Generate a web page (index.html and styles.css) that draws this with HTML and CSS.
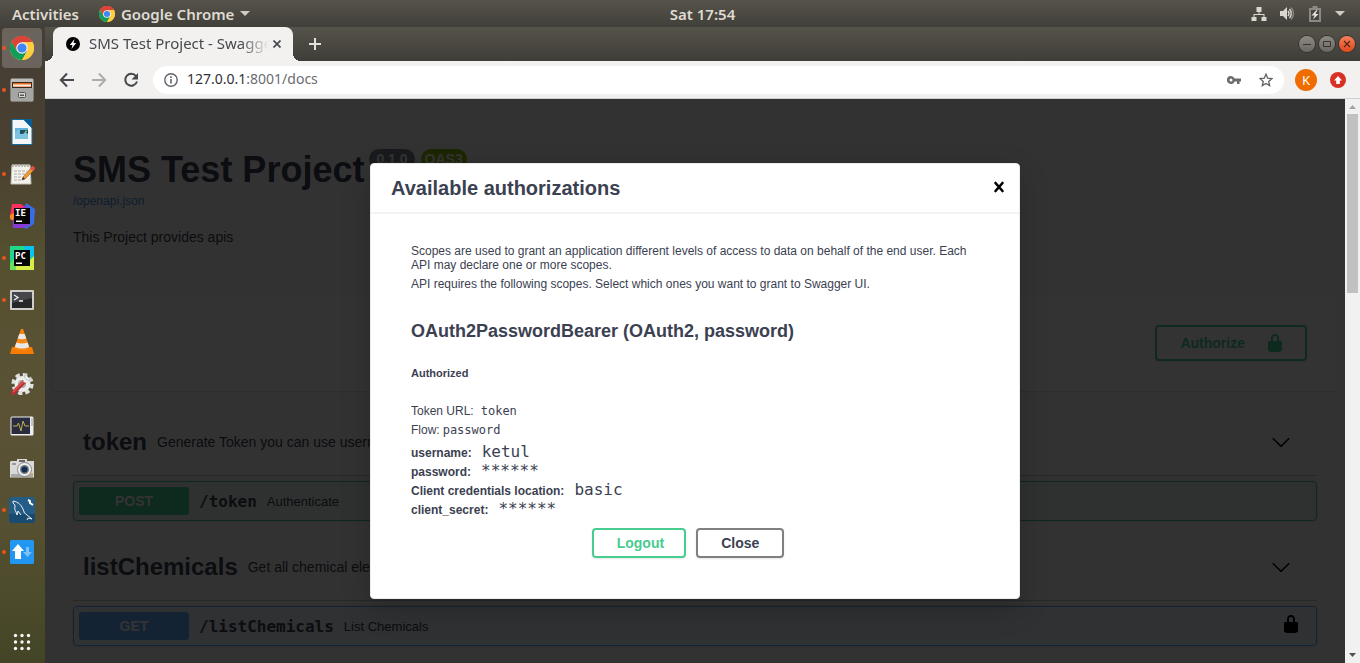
FILE: index.html
```html
<!DOCTYPE html>
<html lang="en">
<head>
<meta charset="utf-8">
<title>SMS Test Project - Swagger UI</title>
<link rel="stylesheet" href="styles.css">
</head>
<body>
<svg class="defs" width="0" height="0" aria-hidden="true">
  <symbol id="chrome" viewBox="0 0 24 24">
    <circle cx="12" cy="12" r="12" fill="#fbc93a"/>
    <path d="M12 12 1.6 6A12 12 0 0 1 22.4 6Z" fill="#db4437"/>
    <path d="M12 6H22.4A12 12 0 0 0 1.6 6L6.8 15Z" fill="#db4437"/>
    <path d="M1.6 6A12 12 0 0 0 12 24L17.2 15 12 12 6.8 15Z" fill="#0f9d58"/>
    <path d="M12 6H22.4A12 12 0 0 1 12 24L17.2 15Z" fill="#ffcd40"/>
    <circle cx="12" cy="12" r="5.8" fill="#f1f1f1"/>
    <circle cx="12" cy="12" r="4.6" fill="#4285f4"/>
  </symbol>
  <symbol id="lock" viewBox="0 0 20 20">
    <path d="M15.8 8H14V5.6C14 2.703 12.665 1 10 1 7.334 1 6 2.703 6 5.6V8H4c-.553 0-1 .646-1 1.199V17c0 .549.428 1.139.951 1.307l1.197.387C5.672 18.861 6.55 19 7.1 19h5.8c.549 0 1.428-.139 1.951-.307l1.196-.387c.524-.167.953-.757.953-1.306V9.199C17 8.646 16.352 8 15.8 8zM12 8H8V5.199C8 3.754 8.797 3 10 3c1.203 0 2 .754 2 2.199V8z"/>
  </symbol>
  <symbol id="arrow-down" viewBox="0 0 20 20">
    <path d="M17.418 6.109c.272-.268.709-.268.979 0s.271.701 0 .969l-7.908 7.83c-.27.268-.707.268-.979 0l-7.908-7.83c-.27-.268-.27-.701 0-.969.271-.268.709-.268.979 0L10 13.25l7.418-7.141z"/>
  </symbol>
</svg>

<header class="topbar">
  <div class="topbar-left">
    <button class="activities">Activities</button>
    <button class="app-menu"><svg width="16" height="16"><use href="#chrome"/></svg>Google Chrome<svg width="10" height="6" viewBox="0 0 10 6"><path d="M0 0h10L5 5z" fill="#cfccc4"/></svg></button>
  </div>
  <button class="clock">Sat 17:54</button>
  <div class="tray">
    <svg width="16" height="16" viewBox="0 0 16 16" fill="#dad7cf"><path d="M5.500 1h5v5h-2v2h5v3h2v4h-5v-4h2V9h-9v2h2v4h-5v-4h2V8h5V6h-2z"/></svg>
    <svg width="16" height="16" viewBox="0 0 16 16" fill="none"><path d="M1 5h3l4-4v13l-4-4H1z" fill="#dad7cf"/><path d="M9 5q2 2.500 0 5M10.500 3q3.500 4.500 0 9" stroke="#dad7cf" stroke-width="1.500"/><path d="M12 1.500q5 6 0 12" stroke="#85827b" stroke-width="1.600"/></svg>
    <svg width="16" height="16" viewBox="0 0 16 16"><path d="M5.500 0h5v2h3.500v14H2V2h3.500z" fill="#8c8982"/><path d="M4 4h8v10H4z" fill="#47453f"/><path d="M9.500 4 4.500 9.500h3L6 13.500l5.500-5.500h-3l2-4z" fill="#e6e3dc"/></svg>
    <svg width="10" height="6" viewBox="0 0 10 6"><path d="M0 0h10L5 5z" fill="#cfccc4"/></svg>
  </div>
</header>

<div class="desktop">
  <nav class="dock" aria-label="Dock">
    <button class="dock-item running active" aria-label="Google Chrome"><svg width="24" height="24"><use href="#chrome"/></svg></button>
    <button class="dock-item running" aria-label="Files"><svg width="24" height="24" viewBox="0 0 24 24"><rect x=".5" y=".5" width="23" height="23" rx="1.500" fill="#bdbdbb"/><path d="M1 10h22v13H1z" fill="#a5a5a3"/><path d="M2 4h20v6H2z" fill="#3a2a20"/><path d="M3 5h18v4H3z" fill="#e86a1c"/><path d="M3 6.500h18v2H3z" fill="#f6ece2"/><rect x="8.500" y="14.500" width="7" height="5" rx="1" fill="#d8d8d6" stroke="#555"/><path d="M10 16.500h4v1.500h-4z" fill="#555"/></svg></button>
    <button class="dock-item" aria-label="LibreOffice Writer"><svg width="24" height="26" viewBox="0 0 24 26"><path d="M2 .5h12L22 9v16.500H2z" fill="#f4f6f8" stroke="#146c9c"/><path d="M13 0h9v9z" fill="#0b5c93"/><path d="M5 9h13v3H8v8H5z" fill="#64b4d8"/><path d="M8 11h10v9H5v-6z" fill="#7cc4e0"/><path d="M10 11h8v4l-3-2-2 2h-3z" fill="#1c4f61"/><circle cx="16" cy="12.500" r="1" fill="#a8c850"/></svg></button>
    <button class="dock-item running" aria-label="Text Editor"><svg width="26" height="24" viewBox="0 0 26 24"><path d="M3 3h18l1 19H2z" fill="#f3f2ed" stroke="#c4c2b8"/><path d="M4 2v3M7 2v3M10 2v3M13 2v3M16 2v3M19 2v3" stroke="#aaa8a0" stroke-width="1.500"/><path d="M5 9h13M5 12h11M5 15h8M5 18h7" stroke="#aaa" stroke-dasharray="3 1"/><path d="m13 18 1-3 8-9 3 2-9 9z" fill="#ed9b35" stroke="#9b5819" stroke-width=".6"/><path d="m21 7 2-3q3 0 3 3l-2 2z" fill="#df5145"/><path d="m13 18 1-3 2 2z" fill="#333"/></svg></button>
    <button class="dock-item" aria-label="IntelliJ IDEA"><svg width="26" height="26" viewBox="0 0 26 26"><path d="m3 1 9 0 4 3-8 18-7-8z" fill="#fe315d"/><path d="m1 12 6-3v10l-6-3z" fill="#f98a1f"/><path d="m17 0 9 6-1 15-8 5-8-5z" fill="#3b6be8"/><path d="m4 17 5-10 9-5 3 20-8 3-9 0z" fill="#883bd6"/><path d="M5 5h16v16H5z" fill="#050505"/><text class="ide-mark" x="6" y="13">IE</text><path d="M7 17.500h6v1.500H7z" fill="#fff"/></svg></button>
    <button class="dock-item running" aria-label="PyCharm"><svg width="24" height="24" viewBox="0 0 24 24"><path d="M0 0h24v24H0z" fill="#21d789"/><path d="M14 0h10v14L15 5z" fill="#07c3f2"/><path d="m24 10-9 9-15 0v5h24z" fill="#d8ee48"/><path d="m0 18 6-8v14H0z" fill="#6be05e"/><path d="M4 4h16v16H4z" fill="#050505"/><text class="ide-mark" x="5" y="13">PC</text><path d="M6 16.500h6v1.500H6z" fill="#fff"/></svg></button>
    <button class="dock-item running" aria-label="Terminal"><svg width="24" height="20" viewBox="0 0 24 20"><rect width="24" height="20" rx="1" fill="#cfcfcd"/><path d="M2 2h20v16H2z" fill="#262729"/><path d="M2 2h20v6L2 13z" fill="#45474a"/><path d="m4 5 4 2.500L4 10M9 11h4" fill="none" stroke="#f2f2f2" stroke-width="1.300"/></svg></button>
    <button class="dock-item" aria-label="VLC"><svg width="24" height="26" viewBox="0 0 24 26"><path d="M2 18h20l2 7H0z" fill="#f57c00"/><path d="M11 0h2l7 20q-8 3-16 0z" fill="#f68714"/><path d="m9.300 5h5.400l1.600 4.500q-4.300 1.500-8.600 0zM6.400 13.500q5.600 1.800 11.200 0l1.600 4.500q-7.200 3-14.400 0z" fill="#e9e9e7"/></svg></button>
    <button class="dock-item" aria-label="Settings"><svg width="24" height="24" viewBox="0 0 24 24"><circle cx="12.500" cy="12" r="8" fill="#eceeec"/><circle cx="12.500" cy="12" r="9.300" fill="none" stroke="#dfe1df" stroke-width="3.600" stroke-dasharray="4.300 3.005"/><circle cx="12" cy="12" r="4" fill="#a9aaa5"/><path d="m3 21 11-11" stroke="#b92f33" stroke-width="4" stroke-linecap="round"/><path d="m3 20 11-11" stroke="#e0585a" stroke-width="1.200"/><path d="m14 10 4-4" stroke="#eee" stroke-width="3"/><path d="M17 1q-4 3-1 6t6-1l-3 0-2-2z" fill="#f4f4f4" stroke="#999" stroke-width=".6"/></svg></button>
    <button class="dock-item" aria-label="System Monitor"><svg width="24" height="20" viewBox="0 0 24 20"><rect x=".5" y=".5" width="23" height="19" rx="1.500" fill="#eeeeec"/><path d="M1.500 1.500h18.500v16.500H1.500z" fill="#292c3e"/><path d="M3 10h4l1.500-3 2.500 8 2-10 2 5h4" fill="none" stroke="#bfae4c"/><path d="M21 3h2M21 5h2M21 7h2M21 9h2" stroke="#99a"/></svg></button>
    <button class="dock-item" aria-label="Screenshot"><svg width="24" height="19" viewBox="0 0 24 19"><path d="M1 2h6V0h10v2h7v16.500H0V3z" fill="#d9d9d7"/><path d="M1 15h22v3H1z" fill="#aaa"/><path d="M9 1h6v2H9z" fill="#666"/><circle cx="14.500" cy="10.500" r="7" fill="#efefed" stroke="#888"/><circle cx="14.500" cy="10.500" r="4.500" fill="#73777b"/><circle cx="14.500" cy="10.500" r="3" fill="#122e56"/><path d="M2 4h4v2H2z" fill="#999"/><circle cx="22" cy="15" r="1" fill="#e59a2a"/></svg></button>
    <button class="dock-item running" aria-label="MySQL Workbench"><svg width="26" height="26" viewBox="0 0 26 26"><rect width="26" height="26" rx="3" fill="#235c85"/><path d="M0 17h26v6q0 3-3 3H3q-3 0-3-3z" fill="#194a70"/><path d="M4 4q7 1 10 8 1 5 4 6l5 4-4-1-1 2M4 4q-1 2 2 4-1 5 1 7l1 3 1-4 3 4" fill="none" stroke="#e8eef2"/><path d="m19 3 2 1 0 2 3 2" fill="none" stroke="#fff" stroke-width="2"/></svg></button>
    <button class="dock-item running" aria-label="File Transfer"><svg width="24" height="24" viewBox="0 0 24 24"><rect width="24" height="24" rx="1.500" fill="#2196f3"/><path d="m8 4 6 7h-3v8H5v-8H2z" fill="#fff"/><path d="M16 7h3v5h3l-4.500 5L13 12h3z" fill="#7cc0f8"/></svg></button>
    <button class="dock-item show-apps" aria-label="Show Applications"><svg width="18" height="18" viewBox="0 0 18 18" fill="#f6f5f2"><circle cx="2.500" cy="2.500" r="1.700"/><circle cx="9" cy="2.500" r="1.700"/><circle cx="15.500" cy="2.500" r="1.700"/><circle cx="2.500" cy="9" r="1.700"/><circle cx="9" cy="9" r="1.700"/><circle cx="15.500" cy="9" r="1.700"/><circle cx="2.500" cy="15.500" r="1.700"/><circle cx="9" cy="15.500" r="1.700"/><circle cx="15.500" cy="15.500" r="1.700"/></svg></button>
  </nav>

  <div class="browser">
    <div class="tabstrip">
      <div class="tab">
        <svg width="14" height="14" viewBox="0 0 14 14"><circle cx="7" cy="7" r="7" fill="#000"/><path d="M8.500 2 3.800 8h2.700L5.500 12l4.700-6H7.500z" fill="#fff"/></svg>
        <span class="tab-title">SMS Test Project - Swagger UI</span>
        <button class="tab-close" aria-label="Close tab"><svg width="8" height="8" viewBox="0 0 8 8"><path d="m.5.5 7 7m0-7-7 7" stroke="#45484c" stroke-width="1.700"/></svg></button>
      </div>
      <button class="new-tab" aria-label="New tab"><svg width="12" height="12" viewBox="0 0 12 12"><path d="M6 0v12M0 6h12" stroke="#e4e2dd" stroke-width="2"/></svg></button>
      <div class="window-controls">
        <button class="win-btn" aria-label="Minimize"><svg width="8" height="8" viewBox="0 0 8 8"><path d="M0 4.500h8" stroke="#35342f"/></svg></button>
        <button class="win-btn" aria-label="Maximize"><svg width="8" height="8" viewBox="0 0 8 8"><path d="M.5 1.500h7v5h-7z" fill="none" stroke="#35342f"/></svg></button>
        <button class="win-btn win-close" aria-label="Close"><svg width="8" height="8" viewBox="0 0 8 8"><path d="m1 1 6 6m0-6L1 7" stroke="#5a2413" stroke-width="1.200"/></svg></button>
      </div>
    </div>
    <div class="toolbar">
      <button class="tool" aria-label="Back"><svg width="16" height="16" viewBox="0 0 16 16"><path d="M8 1.500 1.800 8 8 14.500M2 8h13" fill="none" stroke="#45484c" stroke-width="2"/></svg></button>
      <button class="tool" aria-label="Forward"><svg width="16" height="16" viewBox="0 0 16 16"><path d="M8 1.500 14.200 8 8 14.500M14 8H1" fill="none" stroke="#aeadab" stroke-width="2"/></svg></button>
      <button class="tool" aria-label="Reload"><svg width="16" height="16" viewBox="0 0 16 16"><path d="M13 4A6 6 0 1 0 14 9.500" fill="none" stroke="#45484c" stroke-width="2"/><path d="M15 1v6.500H8.500z" fill="#45484c"/></svg></button>
      <div class="omnibox">
        <svg width="14" height="14" viewBox="0 0 14 14"><circle cx="7" cy="7" r="6.200" fill="none" stroke="#5f6368" stroke-width="1.400"/><path d="M6.200 6h1.600v4.500H6.200zM6.200 3.300h1.600v1.600H6.200z" fill="#5f6368"/></svg>
        <a class="address" href="#docs">127.0.0.1<span class="address-path">:8001/docs</span></a>
        <button class="omni-btn" aria-label="Saved passwords"><svg width="14" height="8" viewBox="0 0 14 8"><path d="M4 0a4 4 0 1 0 3.600 5.500H10V8h2.500V5.500H14v-3H7.600A4 4 0 0 0 4 0zm0 2.500a1.500 1.500 0 1 1 0 3 1.500 1.500 0 0 1 0-3z" fill="#6b6b6b" fill-rule="evenodd"/></svg></button>
        <button class="omni-btn" aria-label="Bookmark"><svg width="14" height="14" viewBox="0 0 14 14"><path d="m7 1.200 1.700 4 4.300.4-3.300 2.800 1 4.200L7 10.400l-3.700 2.200 1-4.200L1 5.600l4.300-.4z" fill="none" stroke="#5f6368" stroke-width="1.300"/></svg></button>
      </div>
      <button class="avatar">K</button>
      <button class="update" aria-label="Update"><svg width="16" height="16" viewBox="0 0 16 16"><circle cx="8" cy="8" r="8" fill="#d93025"/><path d="m8 4 4 4.500H9.800V12H6.200V8.500H4z" fill="#fff"/></svg></button>
    </div>

    <div class="viewport">
      <div class="page">
        <main class="document">
          <section class="info wrapper">
            <h1 class="title">SMS Test Project <span class="badge">0.1.0</span> <span class="badge badge-oas">OAS3</span></h1>
            <a class="spec-link" href="#openapi">/openapi.json</a>
            <p class="description">This Project provides apis</p>
          </section>
          <section class="scheme">
            <div class="wrapper scheme-inner">
              <button class="btn btn-authorize">Authorize<svg width="20" height="20" fill="#49cc90"><use href="#lock"/></svg></button>
            </div>
          </section>
          <section class="tags wrapper">
            <div class="tag">
              <h2 class="tag-head"><span class="tag-name">token</span><small class="tag-desc">Generate Token you can use username and password</small><svg width="20" height="20"><use href="#arrow-down"/></svg></h2>
              <div class="op op-post"><span class="method">POST</span><span class="path">/token</span><span class="summary">Authenticate</span></div>
            </div>
            <div class="tag">
              <h2 class="tag-head"><span class="tag-name">listChemicals</span><small class="tag-desc">Get all chemical elements</small><svg width="20" height="20"><use href="#arrow-down"/></svg></h2>
              <div class="op op-get"><span class="method">GET</span><span class="path">/listChemicals</span><span class="summary">List Chemicals</span><svg class="op-lock" width="20" height="20"><use href="#lock"/></svg></div>
            </div>
          </section>
        </main>
        <div class="backdrop">
          <div class="modal" role="dialog" aria-labelledby="modal-title">
            <div class="modal-head">
              <h3 id="modal-title">Available authorizations</h3>
              <button class="modal-close" aria-label="Close dialog"><svg width="20" height="20" viewBox="0 0 20 20"><path d="m6.500 6 7 8m0-8-7 8" stroke="#000" stroke-width="2.600" stroke-linecap="round"/></svg></button>
            </div>
            <div class="modal-body">
              <p>Scopes are used to grant an application different levels of access to data on behalf of the end user. Each API may declare one or more scopes.</p>
              <p>API requires the following scopes. Select which ones you want to grant to Swagger UI.</p>
              <h4>OAuth2PasswordBearer (OAuth2, password)</h4>
              <h6>Authorized</h6>
              <div class="flow">Token URL:<code class="spaced">token</code></div>
              <div class="flow">Flow:<code>password</code></div>
              <dl class="creds">
                <div><dt>username:</dt><dd>ketul</dd></div>
                <div><dt>password:</dt><dd>******</dd></div>
                <div><dt>Client credentials location:</dt><dd>basic</dd></div>
                <div><dt>client_secret:</dt><dd>******</dd></div>
              </dl>
              <div class="actions">
                <button class="btn btn-logout">Logout</button>
                <button class="btn">Close</button>
              </div>
            </div>
          </div>
        </div>
      </div>
      <div class="scrollbar" aria-hidden="true">
        <svg width="15" height="15" viewBox="0 0 15 15"><path d="m4 10 3.500-4L11 10z" fill="#a3a3a3"/></svg>
        <div class="thumb"></div>
        <svg class="scroll-down" width="15" height="15" viewBox="0 0 15 15"><path d="m4 5 3.500 4L11 5z" fill="#505050"/></svg>
      </div>
    </div>
  </div>
</div>
</body>
</html>
```

FILE: styles.css
```css
* { box-sizing: border-box; }

body {
  margin: 0;
  height: 100vh;
  display: flex;
  flex-direction: column;
  overflow: hidden;
  font-family: "Noto Sans", sans-serif;
  color: #3b4151;
}

h1, h2, h3, h4, h6, p, dl, dd { margin: 0; }

button {
  margin: 0;
  padding: 0;
  border: 0;
  background: none;
  font: inherit;
  color: inherit;
}

svg { display: block; flex: none; }
.defs { position: absolute; }

/* System bar */
.topbar {
  flex: none;
  display: grid;
  grid-template-columns: 1fr auto 1fr;
  align-items: center;
  height: 27px;
  padding: 0 15px 0 12px;
  background: linear-gradient(#56534a, #403f39);
  color: #dfdbd2;
  font-size: 15px;
  font-weight: 600;
  line-height: 20px;
}

.topbar-left, .app-menu, .tray { display: flex; align-items: center; }
.topbar-left { gap: 20px; }
.app-menu { gap: 6px; }
.clock { margin-left: 48px; }
.tray { justify-content: flex-end; gap: 12px; }

/* Dock */
.desktop { flex: 1; min-height: 0; display: flex; }

.dock {
  flex: none;
  display: flex;
  flex-direction: column;
  width: 45px;
  background: linear-gradient(#453e36 0%, #49402f 20%, #555030 36%, #5b5236 62%, #555031 78%, #4a4a2a 92%, #434327 100%);
}

.dock-item {
  position: relative;
  display: grid;
  place-items: center;
  width: 40px;
  height: 40px;
  margin: 1px 0 1px 2px;
  border-radius: 4px;
}

.dock-item.active { background: #6b645d; }

.dock-item.running::before {
  content: "";
  position: absolute;
  left: 0;
  top: 18px;
  width: 4px;
  height: 4px;
  border-radius: 50%;
  background: #e95420;
}

.show-apps { margin-top: auto; }

.ide-mark {
  font: bold 9px "DejaVu Sans Mono", monospace;
  fill: #fff;
}

/* Browser chrome */
.browser { flex: 1; min-width: 0; display: flex; flex-direction: column; }

.tabstrip {
  flex: none;
  display: flex;
  align-items: center;
  height: 34px;
  padding: 0 5px 0 8px;
  background: linear-gradient(#56534a, #3e3d38);
}

.tab {
  position: relative;
  display: flex;
  align-items: center;
  width: 240px;
  height: 34px;
  padding: 0 8px 0 13px;
  border-radius: 8px 8px 0 0;
  background: #f2f1f0;
  color: #45484c;
  font-size: 15px;
  line-height: 20px;
}

.tab::before, .tab::after {
  content: "";
  position: absolute;
  bottom: 0;
  width: 8px;
  height: 8px;
}

.tab::before { left: -8px; background: radial-gradient(circle at 0 0, transparent 8px, #f2f1f0 8px); }
.tab::after { right: -8px; background: radial-gradient(circle at 100% 0, transparent 8px, #f2f1f0 8px); }

.tab-title {
  flex: 1;
  margin-left: 9px;
  padding-bottom: 2px;
  overflow: hidden;
  white-space: nowrap;
  mask-image: linear-gradient(to right, #000 84%, transparent);
}

.tab-close { display: grid; place-items: center; width: 16px; height: 16px; }
.new-tab { margin-left: 16px; }
.window-controls { display: flex; gap: 4px; margin-left: auto; }

.win-btn {
  display: grid;
  place-items: center;
  width: 16px;
  height: 16px;
  border-radius: 50%;
  background: linear-gradient(#8b8982, #6a6861);
  box-shadow: 0 0 0 1px #35342f;
}

.win-close { background: linear-gradient(#f3805b, #e2481a); }

.toolbar {
  flex: none;
  display: flex;
  align-items: center;
  height: 38px;
  padding: 0 14px;
  gap: 16px;
  border-bottom: 1px solid #d0d0ce;
  background: #f2f1f0;
}

.omnibox {
  flex: 1;
  display: flex;
  align-items: center;
  height: 28px;
  margin: 0 -5px 0 -2px;
  padding: 0 11px;
  border-radius: 14px;
  background: #fff;
}

.address {
  flex: 1;
  margin-left: 9px;
  padding-bottom: 2px;
  color: #303236;
  font-size: 14px;
  line-height: 20px;
  text-decoration: none;
}

.address-path { color: #6a6d71; }
.omni-btn { margin-left: 18px; }

.avatar {
  width: 22px;
  height: 22px;
  border-radius: 50%;
  background: #ef6c00;
  color: #fff;
  font-size: 13px;
  line-height: 22px;
}

.update { margin-left: -3px; }

/* Page */
.viewport { flex: 1; min-height: 0; display: flex; }

.page {
  position: relative;
  flex: 1;
  overflow: hidden;
  background: #fafafa;
  font-family: "Liberation Sans", Arial, sans-serif;
}

.document { padding: 0 8px; }
.wrapper { padding: 0 20px; }
.info { padding-top: 50px; height: 196px; }

.title {
  font-size: 36px;
  line-height: 42px;
}

.badge {
  display: inline-block;
  position: relative;
  top: -5px;
  margin-left: -5px;
  padding: 2px 7px;
  border-radius: 57px;
  background: #7d8492;
  color: #fff;
  font-size: 14px;
  line-height: 16px;
  vertical-align: super;
}

.badge-oas { margin-left: -4px; padding: 2px 4px; background: #89bf04; }

.spec-link {
  display: block;
  margin-top: 3px;
  color: #4990e2;
  font-size: 12px;
  line-height: 14px;
  text-decoration: none;
}

.description { margin-top: 21px; font-size: 14px; line-height: 16px; }

.scheme {
  padding: 30px 0;
  background: #fff;
  box-shadow: 0 1px 2px rgba(0, 0, 0, .15);
}

.scheme-inner { display: flex; justify-content: flex-end; padding-right: 30px; }

.btn {
  padding: 5px 23px;
  border: 2px solid #808080;
  border-radius: 4px;
  box-shadow: 0 1px 2px rgba(0, 0, 0, .1);
  color: #3b4151;
  font-size: 14px;
  font-weight: 700;
  line-height: 16px;
}

.btn-authorize, .btn-logout {
  padding-right: 20px;
  border-color: #49cc90;
  color: #49cc90;
}

.btn-authorize {
  display: flex;
  align-items: center;
  gap: 20px;
  height: 36px;
}

.tags { padding-top: 20px; }
.tag { margin-bottom: 15px; }

.tag-head {
  display: flex;
  align-items: center;
  height: 65px;
  margin-bottom: 5px;
  padding: 0 26px 2px 10px;
  border-bottom: 1px solid rgba(59, 65, 81, .3);
  font-size: 24px;
}

.tag-desc { flex: 1; padding: 0 10px; font-size: 14px; font-weight: 400; }

.op {
  display: flex;
  align-items: center;
  padding: 5px;
  border: 1px solid;
  border-radius: 4px;
  box-shadow: 0 0 3px rgba(0, 0, 0, .19);
}

.op-post { border-color: #49cc90; background: rgba(73, 204, 144, .1); }
.op-get { border-color: #61affe; background: rgba(97, 175, 254, .1); }

.method {
  width: 110px;
  border-radius: 3px;
  color: #fff;
  font-size: 14px;
  font-weight: 700;
  line-height: 28px;
  text-align: center;
}

.op-post .method { background: #49cc90; }
.op-get .method { background: #61affe; }

.path {
  padding: 0 10px;
  font: bold 16px "DejaVu Sans Mono", monospace;
}

.summary { flex: 1; font-size: 13px; }
.op-lock { margin: 0 10px 4px 0; }

/* Dialog */
.backdrop {
  position: absolute;
  inset: 0;
  display: grid;
  place-items: center;
  background: rgba(0, 0, 0, .8);
}

.modal {
  width: 100%;
  max-width: 650px;
  border: 1px solid #ebebeb;
  border-radius: 4px;
  background: #fff;
  box-shadow: 0 10px 30px rgba(0, 0, 0, .2);
}

.modal-head {
  display: flex;
  align-items: center;
  justify-content: space-between;
  height: 50px;
  padding: 0 10px 0 20px;
  border-bottom: 2px solid #f2f2f2;
}

.modal-head h3 { font-size: 20px; line-height: 24px; }
.modal-close { padding-bottom: 2px; }
.modal-body { padding: 30px 40px 40px; font-size: 12px; line-height: 14px; }
.modal-body p { margin-bottom: 5px; }
.modal-body h4 { margin-top: 29px; font-size: 18px; line-height: 22px; }
.modal-body h6 { margin: 24px 0 22px; font-size: 11px; line-height: 14px; }
.flow { line-height: 19px; }
.flow code { margin-left: 3px; font: 12px "DejaVu Sans Mono", monospace; }
.flow .spaced { margin-left: 7px; }

.creds { padding-top: 2px; }

.creds div {
  display: flex;
  align-items: baseline;
  gap: 10px;
  height: 19px;
}

.creds dt { font-weight: 700; }
.creds dd { font: 16px/19px "DejaVu Sans Mono", monospace; }

.actions {
  display: flex;
  justify-content: center;
  gap: 10px;
  padding: 10px 14px 0 0;
}

/* Scrollbar */
.scrollbar {
  flex: none;
  display: flex;
  flex-direction: column;
  width: 15px;
  background: #f1f1f1;
}

.thumb { height: 34%; max-height: 179px; margin: 0 2px; background: #c1c1c1; }
.scroll-down { margin-top: auto; }
```
